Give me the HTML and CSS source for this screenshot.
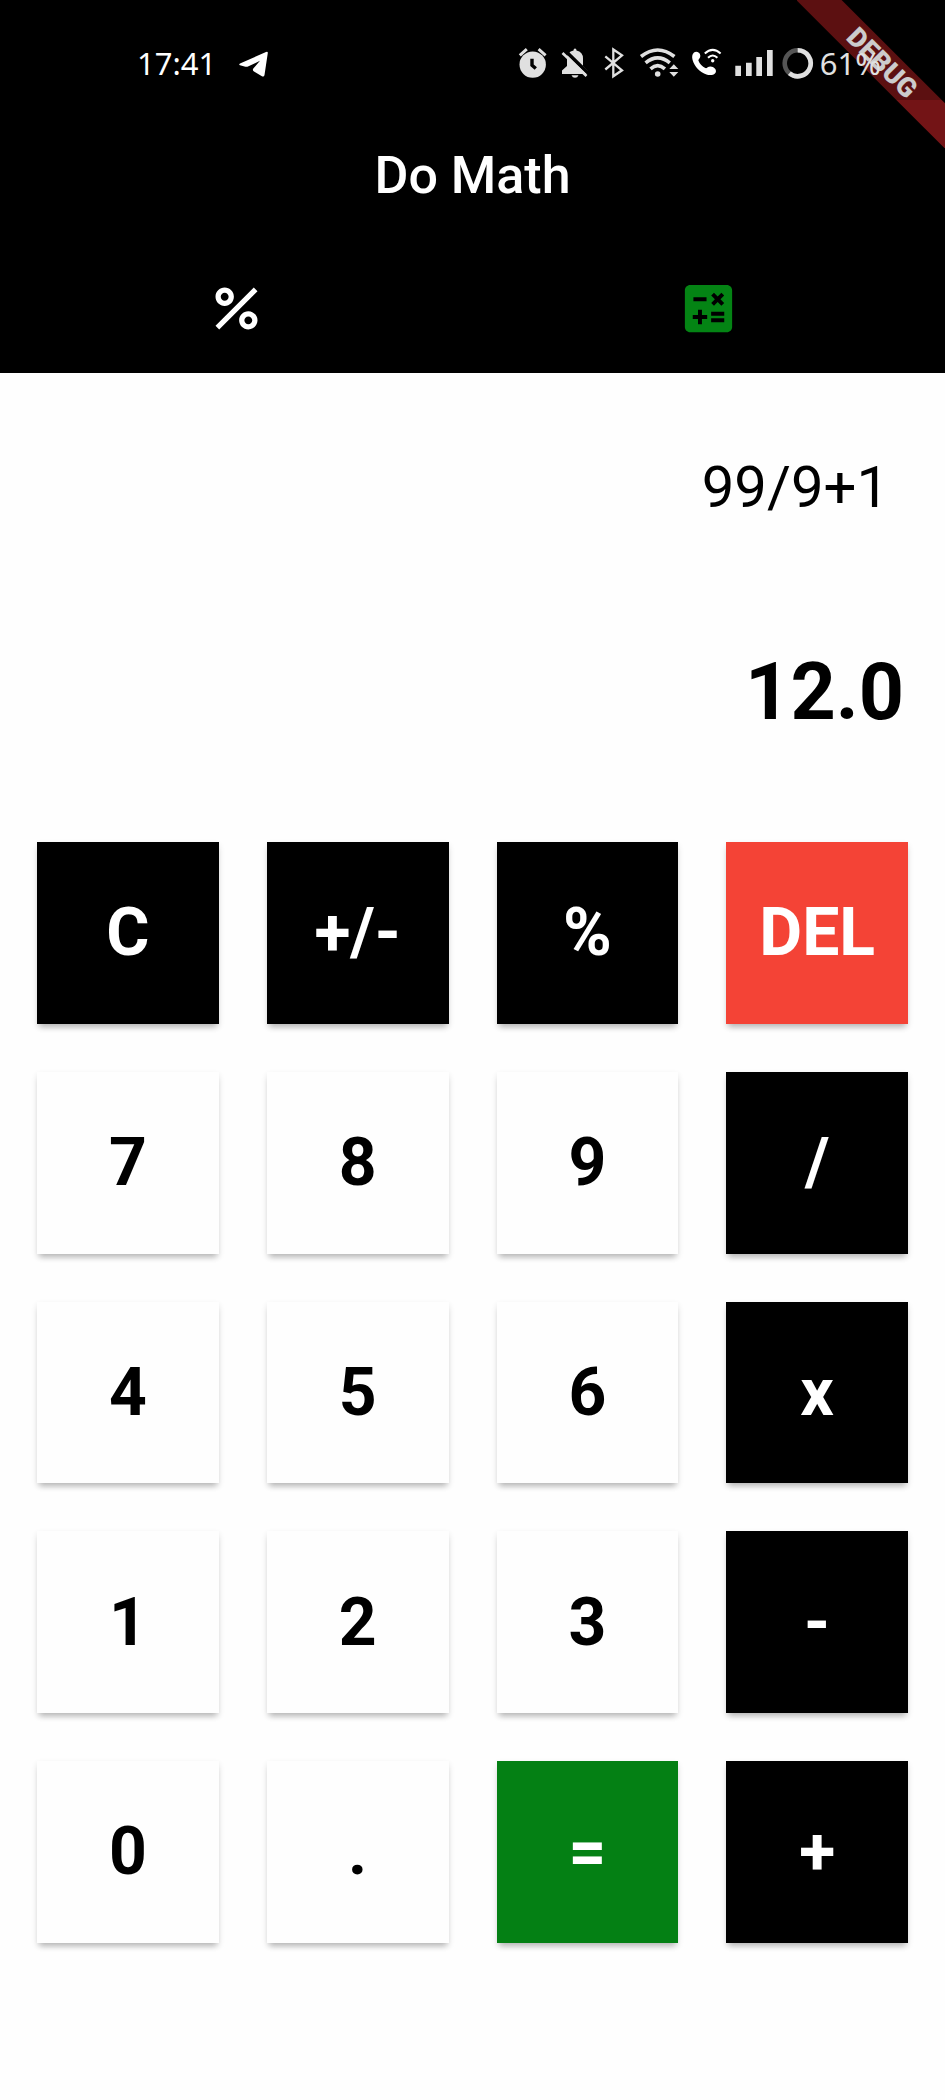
FILE: index.html
```html
<!DOCTYPE html>
<html lang="en">
<head>
<meta charset="utf-8">
<meta name="viewport" content="width=device-width, initial-scale=1">
<title>Do Math</title>
<link rel="stylesheet" href="styles.css">
</head>
<body>
<div class="ribbon-clip"><span class="ribbon">DEBUG</span></div>
<header class="header">
  <div class="status">
    <time class="clock">17:41</time>
    <svg class="telegram" width="32" height="32" viewBox="0 0 32 32" aria-hidden="true"><path d="M2 16.500 L28 5 Q30 4.300 29.800 6 L26.500 28 Q26 30.500 23.500 29 L16 24.500 Q14 23 15.500 21.300 L22 13.800 L10.500 19.300 Q8.500 20.300 6.500 19.500 L2 18.300 Q.5 17.500 2 16.500z" fill="#fff"/></svg>
    <div class="status-icons">
      <svg width="34" height="32" viewBox="0 0 34 32" aria-hidden="true"><circle cx="16.700" cy="17.600" r="13.200" fill="#e0e0e0"/><path d="M3.800 8.300 10.800 2.200M22.600 2.200 29.600 8.300" stroke="#e0e0e0" stroke-width="3" fill="none"/><path d="M16 11.800v6.400l3.800 3.400" stroke="#000" stroke-width="3.400" fill="none"/></svg>
      <svg width="38" height="32" viewBox="0 0 38 32" aria-hidden="true"><path d="M17.500 3.500q0-2 1.500-2t1.500 2q6.500 1.500 6.500 8V19l4.500 4.500V27H6v-3.500L11 19v-7.500q0-6.500 6.500-8z" fill="#e0e0e0"/><path d="M15.500 28.300h7q-1 2.500-3.500 2.500t-3.500-2.500z" fill="#e0e0e0"/><path d="M8.500 3 34 28" stroke="#000" stroke-width="3.500"/><path d="M6.500 6 30.500 29" stroke="#e0e0e0" stroke-width="2.600"/></svg>
      <svg width="30" height="32" viewBox="0 0 30 32" aria-hidden="true"><path d="M5.300 9.300 22 23.300 13.300 29.300V2.500L22 8.300 5.300 22.500" fill="none" stroke="#e0e0e0" stroke-width="2.300"/></svg>
      <svg width="46" height="32" viewBox="0 0 46 32" aria-hidden="true"><g fill="none" stroke="#e0e0e0" stroke-width="3.600"><path d="M5 9.500Q21.700-3.500 38.400 9.500"/><path d="M9.600 15.800Q21.700 5.800 33.800 15.800"/><path d="M14.500 21.800Q21.700 15.500 28.900 21.800"/></g><circle cx="21.700" cy="27" r="2.800" fill="#e0e0e0"/><path d="M33.300 22 37.800 17.300 42.300 22zM33.300 24.900H42.300L37.800 29.800z" fill="#e0e0e0"/></svg>
      <svg width="38" height="32" viewBox="0 0 38 32" aria-hidden="true"><path d="M6 5.500C8 4 12 5 12.300 8.500c.2 3-2.300 3.800-1.800 5.300 1 3 4 6 6.800 7.200 1.700.7 2.200-1.600 5.200-1.600 3.500 0 6.300 3.200 5.300 5.800-1 2.800-5.800 3.600-9.300 2.300C12 25.500 6.500 19.500 4.600 13 3.800 10 4 7 6 5.500z" fill="#fff"/><g fill="none" stroke="#fff" stroke-width="2"><path d="M16.800 6.500Q24.700-.8 32.600 6.500"/><path d="M20 10.800Q24.700 6 29.400 10.800"/></g><circle cx="24.700" cy="13.800" r="1.700" fill="#fff"/></svg>
      <svg width="44" height="32" viewBox="0 0 44 32" aria-hidden="true"><path d="M3.300 18.700H9V29H3.300zM14 15.700h5.700V29H14zM24.300 10H30v19h-5.700zM35 3h5.700v26H35z" fill="#e0e0e0"/></svg>
      <svg width="32" height="32" viewBox="0 0 32 32" aria-hidden="true"><circle cx="15.700" cy="16.300" r="13" fill="none" stroke="#555" stroke-width="4.600"/><path d="M15.700 3.300A13 13 0 1 1 7.400 26.300" fill="none" stroke="#e0e0e0" stroke-width="4.600"/></svg>
      <span class="battery">61%</span>
    </div>
  </div>
  <h1 class="title">Do Math</h1>
  <nav class="tabs">
    <button class="tab" aria-label="Percent"><svg class="tab-icon" viewBox="0 0 24 24"><path d="M7.500 4C5.570 4 4 5.570 4 7.500S5.570 11 7.500 11 11 9.430 11 7.500 9.430 4 7.500 4zm0 5C6.670 9 6 8.330 6 7.500S6.670 6 7.500 6 9 6.670 9 7.500 8.330 9 7.500 9zM16.500 13c-1.930 0-3.500 1.570-3.500 3.500s1.570 3.500 3.500 3.500 3.500-1.570 3.500-3.500-1.570-3.500-3.500-3.500zm0 5c-.83 0-1.500-.67-1.500-1.500s.67-1.500 1.500-1.500 1.500.67 1.500 1.500-.67 1.500-1.500 1.500zM5.410 20 4 18.590 18.590 4 20 5.410z"/></svg></button>
    <button class="tab tab-active" aria-label="Calculator"><svg class="tab-icon" viewBox="0 0 24 24"><path d="M19 3H5c-1.100 0-2 .9-2 2v14c0 1.100.9 2 2 2h14c1.100 0 2-.9 2-2V5c0-1.100-.9-2-2-2zm-5.970 4.060L14.090 6l1.410 1.410L16.910 6l1.060 1.060-1.410 1.410 1.410 1.410-1.060 1.060-1.410-1.400-1.410 1.410-1.060-1.060 1.410-1.410-1.410-1.420zm-6.780.66h5v1.500h-5v-1.500zM11.500 16h-2v2H8v-2H6v-1.500h2v-2h1.500v2h2V16zm6.500 1.250h-5v-1.500h5v1.500zm0-2.500h-5v-1.500h5v1.500z"/></svg></button>
  </nav>
</header>
<main class="calculator">
  <div class="display">
    <div class="expression">99/9+1</div>
    <output class="result">12.0</output>
  </div>
  <div class="keys">
    <button class="key dark">C</button><button class="key dark">+/-</button><button class="key dark">%</button><button class="key delete">DEL</button>
    <button class="key">7</button><button class="key">8</button><button class="key">9</button><button class="key dark">/</button>
    <button class="key">4</button><button class="key">5</button><button class="key">6</button><button class="key dark">x</button>
    <button class="key">1</button><button class="key">2</button><button class="key">3</button><button class="key dark">-</button>
    <button class="key">0</button><button class="key">.</button><button class="key equals">=</button><button class="key dark">+</button>
  </div>
</main>
</body>
</html>
```
FILE: styles.css
```css
* { box-sizing: border-box; }

body {
  position: relative;
  margin: 0;
  background: #fefefe;
  color: #000;
  font-family: Roboto, "Liberation Sans", sans-serif;
}

button {
  margin: 0;
  padding: 0;
  border: 0;
  border-radius: 0;
  background: none;
  font-family: inherit;
  cursor: pointer;
}

.header {
  background: #000;
  color: #fff;
}

.status {
  position: relative;
  z-index: 3;
  display: flex;
  align-items: center;
  height: 100px;
  padding: 26px 64px 0 137px;
  background: rgba(0, 0, 0, 0.2);
  font-family: "Noto Sans", sans-serif;
}

.clock {
  font-size: 31px;
  line-height: 32px;
}

.telegram { margin-left: 22px; }

.status-icons {
  display: flex;
  align-items: center;
  gap: 6px;
  margin-left: auto;
}

.battery {
  color: #e0e0e0;
  font-size: 31px;
  line-height: 32px;
}

.ribbon-clip {
  position: absolute;
  top: 0;
  right: 0;
  z-index: 2;
  width: 148px;
  height: 148px;
  overflow: hidden;
}

.ribbon {
  position: absolute;
  top: 47px;
  left: -35px;
  width: 240px;
  height: 32px;
  background: #731416;
  color: #fff;
  font-size: 27px;
  font-weight: 900;
  line-height: 32px;
  text-align: center;
  transform: rotate(45deg);
}

.title {
  margin: 0;
  padding-top: 2px;
  font-size: 52px;
  font-weight: 500;
  line-height: 148px;
  text-align: center;
}

.tabs {
  display: grid;
  grid-template-columns: 1fr 1fr;
  height: 123px;
  padding-bottom: 6px;
}

.tab {
  display: flex;
  align-items: center;
  justify-content: center;
  color: #fff;
}

.tab-active { color: #048414; }

.tab-icon {
  width: 63px;
  height: 63px;
  fill: currentColor;
}

.display {
  display: flex;
  flex-direction: column;
  align-items: flex-end;
  gap: 121px;
  padding: 78px 41px 102px;
}

.expression {
  padding-right: 15px;
  font-size: 58px;
  line-height: 72px;
}

.result {
  font-size: 79px;
  font-weight: 700;
  line-height: 96px;
}

.keys {
  display: grid;
  grid-template-columns: repeat(4, 1fr);
  gap: 48px;
  padding: 0 37px 156px;
}

.key {
  aspect-ratio: 1;
  background: #fefefe;
  color: #000;
  font-size: 66px;
  font-weight: 700;
  box-shadow: 0 6px 6px -3px rgba(0, 0, 0, 0.2), 0 3px 6px rgba(0, 0, 0, 0.12);
}

.dark {
  background: #000;
  color: #fff;
}

.delete {
  background: #f44336;
  color: #fff;
}

.equals {
  background: #048014;
  color: #fff;
}
```
